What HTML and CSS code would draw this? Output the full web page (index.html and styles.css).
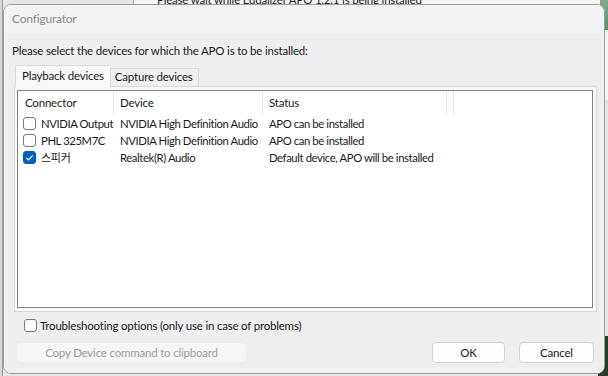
FILE: index.html
```html
<!DOCTYPE html>
<html>
<head>
<meta charset="utf-8">
<link rel="stylesheet" href="styles.css">
</head>
<body>
<div class="desktop">
  <div class="bg-window">
    <span class="bg-text">Please wait while Equalizer APO 1.2.1 is being installed</span>
  </div>
  <div class="bg-green"></div>
  <div class="bg-dark"></div>
  <div class="dialog">
    <div class="titlebar">Configurator</div>
    <div class="content">
      <div class="prompt">Please select the devices for which the APO is to be installed:</div>
      <div class="tabs">
        <div class="tab active">Playback devices</div>
        <div class="tab">Capture devices</div>
      </div>
      <div class="panel">
        <div class="list">
          <div class="row header">
            <div class="col c1">Connector</div>
            <div class="col c2">Device</div>
            <div class="col c3">Status</div>
            <div class="col c4"></div>
          </div>
          <div class="row item">
            <div class="col c1"><span class="cb"></span>NVIDIA Output</div>
            <div class="col c2">NVIDIA High Definition Audio</div>
            <div class="col c3">APO can be installed</div>
          </div>
          <div class="row item">
            <div class="col c1"><span class="cb"></span>PHL 325M7C</div>
            <div class="col c2">NVIDIA High Definition Audio</div>
            <div class="col c3">APO can be installed</div>
          </div>
          <div class="row item">
            <div class="col c1"><span class="cb checked"><svg width="13" height="13" viewBox="0 0 13 13"><path d="M3.3 6.8 L5.4 8.9 L9.8 4.4" fill="none" stroke="#fff" stroke-width="1.1"/></svg></span><span class="ko">스피커</span></div>
            <div class="col c2">Realtek(R) Audio</div>
            <div class="col c3">Default device, APO will be installed</div>
          </div>
        </div>
      </div>
      <div class="trouble"><span class="cb big"></span>Troubleshooting options (only use in case of problems)</div>
      <div class="buttons">
        <div class="btn disabled">Copy Device command to clipboard</div>
        <div class="spacer"></div>
        <div class="btn ok">OK</div>
        <div class="btn cancel">Cancel</div>
      </div>
    </div>
  </div>
</div>
</body>
</html>
```

FILE: styles.css
```css
* { box-sizing: border-box; }
html, body {
  margin: 0;
  padding: 0;
  width: 608px;
  height: 376px;
  overflow: hidden;
}
body {
  font-family: Lato, "Noto Sans CJK KR", sans-serif;
  font-size: 11.5px;
  letter-spacing: -0.2px;
  color: #1a1a1a;
  background: #e3e3e3;
}
.desktop {
  position: relative;
  width: 608px;
  height: 376px;
  background: linear-gradient(to right, #d8d8d8 0, #d8d8d8 2px, #9a9a9a 2px, #9a9a9a 3px, #e6e6e6 3px);
}
.bg-window {
  position: absolute;
  left: 133px;
  top: -20px;
  width: 475px;
  height: 120px;
  background: #f5f5f5;
  border-left: 1px solid #a8a8a8;
}
.bg-text {
  position: absolute;
  left: 23px;
  top: 13px;
  color: #222;
  white-space: nowrap;
}
.bg-green {
  position: absolute;
  right: 0;
  top: 0;
  width: 8px;
  height: 30px;
  background: linear-gradient(#7fae8c, #5a8f6d);
}
.bg-dark {
  position: absolute;
  right: 0;
  bottom: 0;
  width: 10px;
  height: 40px;
  background: #2d3a2f;
}
.dialog {
  position: absolute;
  left: 3px;
  top: 4px;
  width: 602px;
  height: 370px;
  background: #f0f0f0;
  border: 1px solid #9e9e9e;
  border-radius: 8px;
  display: flex;
  flex-direction: column;
  overflow: hidden;
}
.titlebar {
  height: 28px;
  padding-left: 8px;
  line-height: 27px;
  color: #8a8a8a;
  font-size: 12px;
  background: #f3f3f3;
  flex: none;
}
.content {
  flex: 1;
  display: flex;
  flex-direction: column;
  padding: 0 7px 0 8px;
  background: #efefef;
}
.prompt {
  margin-top: 10px;
  height: 16px;
  line-height: 16px;
}
.tabs {
  display: flex;
  align-items: flex-end;
  margin-top: 5px;
  padding-left: 3px;
  height: 22px;
  position: relative;
  z-index: 2;
}
.tab {
  height: 18px;
  line-height: 16px;
  padding: 0 5px 0 4px;
  border: 1px solid #dcdcdc;
  border-bottom: none;
  background: #f0f0f0;
  margin-bottom: 0;
}
.tab.active {
  height: 22px;
  line-height: 20px;
  padding: 0 6px 0 6px;
  background: #f9f9f9;
  border-color: #d9d9d9;
  margin-bottom: -1px;
  border-right: none;
}
.panel {
  width: 583px;
  height: 226px;
  margin-left: 2px;
  border: 1px solid #d9d9d9;
  background: #f9f9f9;
  padding: 3px 3px 3px 2px;
}
.list {
  width: 100%;
  height: 100%;
  border: 1px solid #828282;
  background: #fff;
}
.row {
  display: flex;
  height: 17px;
  line-height: 17px;
  white-space: nowrap;
}
.row.item {
  font-size: 11.3px;
  letter-spacing: -0.4px;
}
.row.header {
  height: 24px;
  line-height: 24px;
}
.row.header .col {
  border-right: 1px solid #e5e5e5;
}
.col {
  flex: none;
  padding-left: 6px;
  display: flex;
  align-items: center;
}
.c1 { width: 96px; padding-left: 5px; }
.header .c1 { padding-left: 7px; }
.c2 { width: 149px; }
.c3 { width: 184px; }
.c4 { width: 0; border-right: none; }
.cb {
  display: inline-block;
  width: 13px;
  height: 13px;
  border: 1px solid #7a7a7a;
  border-radius: 3px;
  background: #fdfdfd;
  margin-right: 5px;
  flex: none;
}
.cb.checked {
  background: #005fb8;
  border-color: #005fb8;
  position: relative;
}
.cb.checked svg {
  position: absolute;
  left: -1px;
  top: -1px;
}
.ko {
  font-family: "Noto Sans CJK KR", sans-serif;
  font-size: 11px;
  letter-spacing: -0.3px;
}
.trouble {
  display: flex;
  align-items: center;
  margin-top: 6px;
  padding-left: 12px;
  height: 14px;
}
.trouble .cb { margin-right: 3px; }
.buttons {
  display: flex;
  margin-top: 10px;
  padding-left: 4px;
}
.spacer { flex: 1; }
.btn {
  height: 21px;
  line-height: 19px;
  text-align: center;
  border: 1px solid #d3d3d3;
  border-radius: 4px;
  background: #fdfdfd;
}
.btn.disabled {
  width: 231px;
  color: #9d9d9d;
  background: #f6f6f6;
  border-color: #ececec;
}
.btn.ok { width: 73px; }
.btn.cancel { width: 75px; margin-left: 14px; margin-right: 3px; }
```
